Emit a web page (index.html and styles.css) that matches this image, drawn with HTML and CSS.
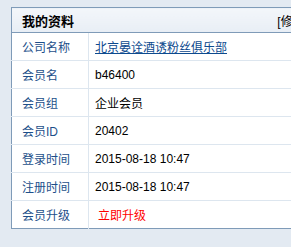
FILE: index.html
```html
<!DOCTYPE html>
<html>
<head>
<meta charset="utf-8">
<link rel="stylesheet" href="styles.css">
</head>
<body>
<div class="page">
  <table class="info">
    <tr class="head">
      <th colspan="2"><div class="head-inner"><span class="title">我的资料</span><a class="edit">[修改资料]</a></div></th>
    </tr>
    <tr><td class="label">公司名称</td><td class="value"><a class="link">北京晏诠酒诱粉丝俱乐部</a></td></tr>
    <tr><td class="label">会员名</td><td class="value">b46400</td></tr>
    <tr><td class="label">会员组</td><td class="value">企业会员</td></tr>
    <tr><td class="label">会员ID</td><td class="value">20402</td></tr>
    <tr><td class="label">登录时间</td><td class="value">2015-08-18 10:47</td></tr>
    <tr><td class="label">注册时间</td><td class="value">2015-08-18 10:47</td></tr>
    <tr><td class="label">会员升级</td><td class="value"><a class="upgrade">立即升级</a></td></tr>
  </table>
</div>
</body>
</html>
```
FILE: styles.css
```css
html, body {
  margin: 0;
  padding: 0;
}
body {
  background: #e3eaf2;
  font-family: "Liberation Sans", "Noto Sans CJK SC", sans-serif;
  font-size: 12px;
  overflow: hidden;
}
.page {
  padding: 7px 0 0 11px;
  width: 400px;
}
.info {
  border-collapse: collapse;
  width: 332px;
  background: #ffffff;
  border: 1px solid #7f9bb8;
}
.head th {
  height: 24px;
  padding: 0;
  background: linear-gradient(#f3f6fa, #e8eef5);
  border-bottom: 1px solid #7f9bb8;
  text-align: left;
}
.head-inner {
  display: flex;
  justify-content: space-between;
  align-items: center;
  padding: 0 10px 0 10px;
}
.title {
  font-size: 13px;
  font-weight: bold;
  color: #000;
}
.edit {
  font-size: 12px;
  font-weight: normal;
  color: #000;
}
.info td {
  height: 27px;
  padding: 0;
  border-top: 1px solid #dde6ef;
  vertical-align: middle;
}
.label {
  width: 66px;
  padding-left: 10px !important;
  color: #1d4f8a;
  border-right: 1px solid #dde6ef;
}
.value {
  padding-left: 6px !important;
  color: #000;
}
.link {
  color: #0d4a8e;
  text-decoration: underline;
}
.upgrade {
  color: #ff0000;
  margin-left: 3px;
}
```
